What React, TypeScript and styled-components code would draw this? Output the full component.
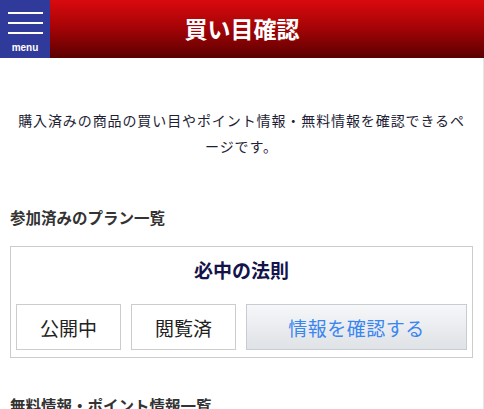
import React from 'react';
import styled, { createGlobalStyle } from 'styled-components';

const GlobalStyle = createGlobalStyle`
    body {
        margin: 0;
        background: #fff;
        font-family: 'Liberation Sans', 'Noto Sans CJK JP', sans-serif;
        color: #222;
    }
`;

const Page = styled.div`
    width: 484px;
    overflow: hidden;
`;

const Header = styled.header`
    display: flex;
    align-items: stretch;
    height: 58px;
    background: linear-gradient(to bottom, #d90a0e 0%, #a80407 45%, #5c0000 100%);
`;

const MenuButton = styled.div`
    width: 50px;
    flex-shrink: 0;
    background: #2f3a9a;
    display: flex;
    flex-direction: column;
    align-items: center;
    padding-top: 12px;
    box-sizing: border-box;
`;

const Bar = styled.span`
    display: block;
    width: 35px;
    height: 2px;
    background: #fff;
    margin-bottom: 8px;
`;

const MenuLabel = styled.span`
    color: #fff;
    font-size: 10px;
    font-weight: bold;
    line-height: 10px;
    margin-top: 1px;
`;

const Title = styled.h1`
    flex: 1;
    margin: 0 50px 0 0;
    display: flex;
    align-items: center;
    justify-content: center;
    color: #fff;
    font-family: 'Liberation Serif', 'Noto Sans CJK JP', serif;
    font-size: 23px;
    font-weight: bold;
    padding-bottom: 2px;
`;

const Content = styled.main`
    border-right: 1px solid #e6e6e6;
    padding: 0 10px;
`;

const Lead = styled.p`
    margin: 0;
    padding: 50px 2px 0;
    text-align: center;
    font-size: 14px;
    line-height: 26px;
    letter-spacing: 0.9px;
    color: #1e1e36;
`;

const SectionTitle = styled.h2<{ top: number }>`
    margin: ${(p) => p.top}px 0 0;
    font-size: 15.5px;
    line-height: 20px;
    font-weight: bold;
    color: #333;
`;

const PlanBox = styled.div`
    margin-top: 17px;
    border: 1px solid #ccc;
    padding: 11px 5px 7px;
`;

const PlanName = styled.div`
    text-align: center;
    font-size: 19px;
    font-weight: bold;
    line-height: 28px;
    color: #14144a;
`;

const ButtonRow = styled.div`
    display: flex;
    gap: 10px;
    margin-top: 18px;
`;

const Status = styled.div`
    width: 105px;
    height: 46px;
    box-sizing: border-box;
    border: 1px solid #ccc;
    display: flex;
    align-items: center;
    justify-content: center;
    font-size: 19px;
    color: #222;
`;

const ConfirmButton = styled.button`
    flex: 1;
    height: 46px;
    border: 1px solid #c8cbcf;
    background: linear-gradient(to bottom, #f6f7f9 0%, #dfe2e6 100%);
    color: #3a86f0;
    font-family: inherit;
    font-size: 19px;
    letter-spacing: 0.5px;
    cursor: pointer;
    padding: 0;
`;

const App = () => {
    return (
        <Page>
            <GlobalStyle />
            <Header>
                <MenuButton>
                    <Bar />
                    <Bar />
                    <Bar />
                    <MenuLabel>menu</MenuLabel>
                </MenuButton>
                <Title>買い目確認</Title>
            </Header>
            <Content>
                <Lead>購入済みの商品の買い目やポイント情報・無料情報を確認できるページです。</Lead>
                <SectionTitle top={49}>参加済みのプラン一覧</SectionTitle>
                <PlanBox>
                    <PlanName>必中の法則</PlanName>
                    <ButtonRow>
                        <Status>公開中</Status>
                        <Status>閲覧済</Status>
                        <ConfirmButton>情報を確認する</ConfirmButton>
                    </ButtonRow>
                </PlanBox>
                <SectionTitle top={39}>無料情報・ポイント情報一覧</SectionTitle>
            </Content>
        </Page>
    );
};

export default App;
